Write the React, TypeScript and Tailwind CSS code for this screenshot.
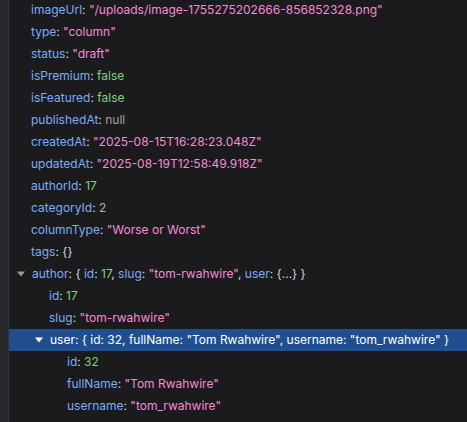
import React from "react";

const K = ({ children }: { children: React.ReactNode }) => <span className="text-[#7cacf8]">{children}</span>;
const S = ({ children }: { children: React.ReactNode }) => <span className="text-[#f28cd4]">"{children}"</span>;
const N = ({ children }: { children: React.ReactNode }) => <span className="text-[#7fd07f]">{children}</span>;
const G = ({ children }: { children: React.ReactNode }) => <span className="text-[#a0a0a6]">{children}</span>;

const Arrow = ({ white }: { white?: boolean }) => (
  <svg width="10" height="8" viewBox="0 0 10 8" className="mr-[6px]">
    <path d="M1 1.5 L9 1.5 L5 6.5 Z" fill={white ? "#ffffff" : "#9a9aa0"} />
  </svg>
);

function Row({ indent, children, sel, arrow }: { indent: number; children: React.ReactNode; sel?: boolean; arrow?: boolean }) {
  return (
    <div className={`h-[22px] flex items-center whitespace-nowrap ${sel ? "bg-[#1f4f8f] text-white" : "text-[#d6d6dc]"}`} style={{ paddingLeft: indent }}>
      {arrow && <Arrow white={sel} />}
      <span>{children}</span>
    </div>
  );
}

export default function App() {
  const c = "text-[#d6d6dc]";
  return (
    <div className="w-[467px] h-[422px] overflow-hidden flex bg-[#1b1b1d] text-[12px]" style={{ fontFamily: "Inter, 'Noto Sans', sans-serif" }}>
      <div className="w-[9px] bg-[#28272c] border-r border-[#333338] shrink-0" />
      <div className="flex-1 -mt-[1px]">
        <Row indent={22}><K>imageUrl</K>: <S>/uploads/image-1755275202666-856852328.png</S></Row>
        <Row indent={22}><K>type</K>: <S>column</S></Row>
        <Row indent={22}><K>status</K>: <S>draft</S></Row>
        <Row indent={22}><K>isPremium</K>: <N>false</N></Row>
        <Row indent={22}><K>isFeatured</K>: <N>false</N></Row>
        <Row indent={22}><K>publishedAt</K>: <G>null</G></Row>
        <Row indent={22}><K>createdAt</K>: <S>2025-08-15T16:28:23.048Z</S></Row>
        <Row indent={22}><K>updatedAt</K>: <S>2025-08-19T12:58:49.918Z</S></Row>
        <Row indent={22}><K>authorId</K>: <N>17</N></Row>
        <Row indent={22}><K>categoryId</K>: <N>2</N></Row>
        <Row indent={22}><K>columnType</K>: <S>Worse or Worst</S></Row>
        <Row indent={22}><K>tags</K>: <span className={c}>{"{}"}</span></Row>
        <Row indent={7} arrow><K>author</K>: {"{ "}<K>id</K>: <N>17</N>, <K>slug</K>: <S>tom-rwahwire</S>, <K>user</K>: {"{…} }"}</Row>
        <Row indent={40}><K>id</K>: <N>17</N></Row>
        <Row indent={40}><K>slug</K>: <S>tom-rwahwire</S></Row>
        <Row indent={25} arrow sel>user: {"{ "}id: 32, fullName: "Tom Rwahwire", username: "tom_rwahwire" {"}"}</Row>
        <Row indent={58}><K>id</K>: <N>32</N></Row>
        <Row indent={58}><K>fullName</K>: <S>Tom Rwahwire</S></Row>
        <Row indent={58}><K>username</K>: <S>tom_rwahwire</S></Row>
      </div>
    </div>
  );
}
